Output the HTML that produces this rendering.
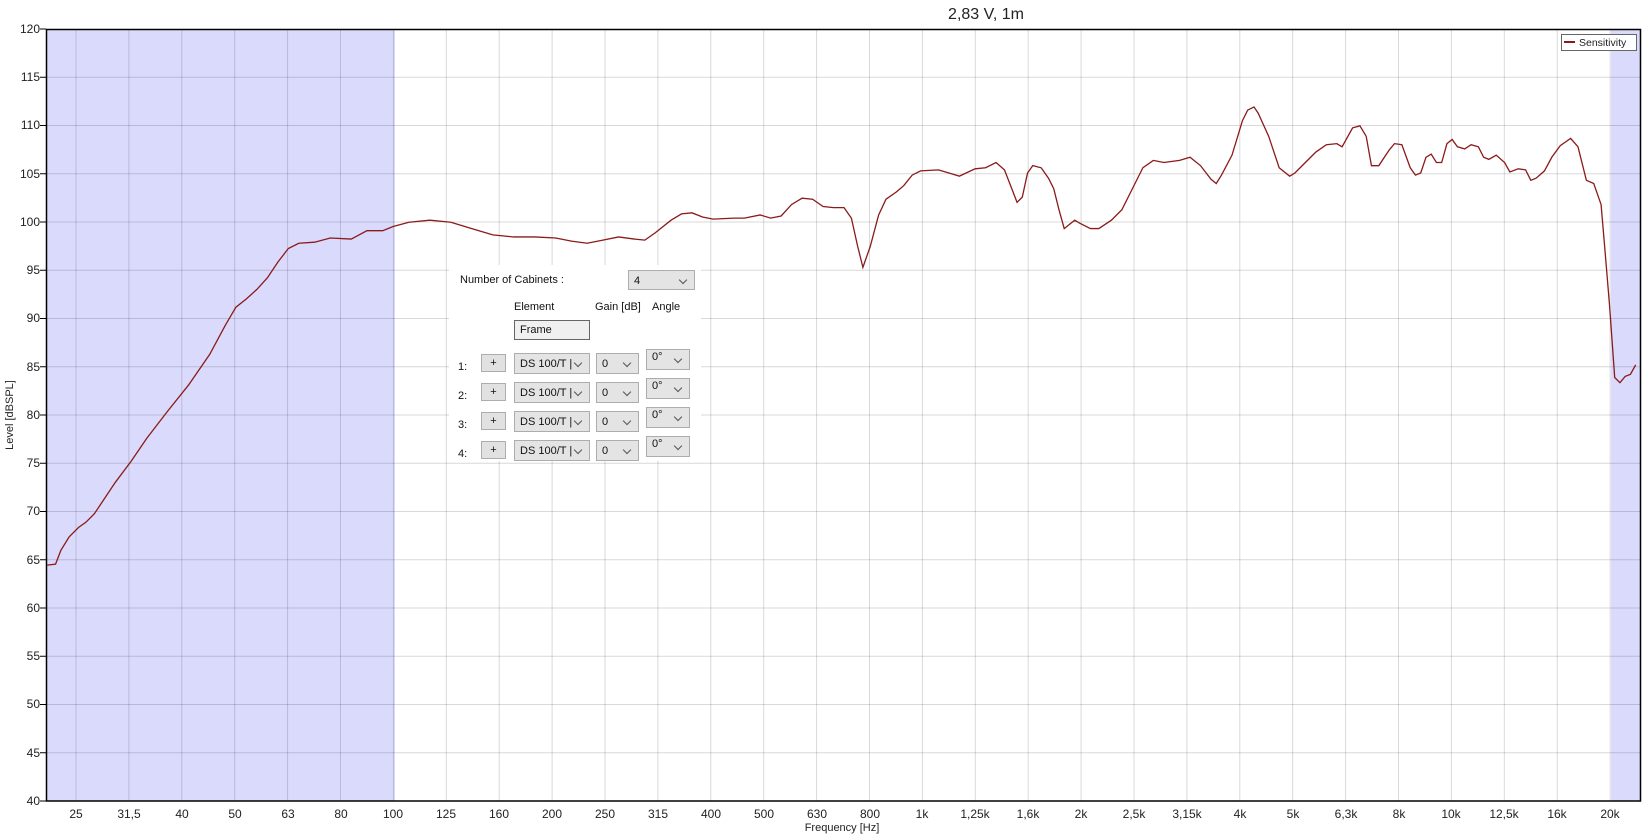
<!DOCTYPE html>
<html><head><meta charset="utf-8"><style>
html,body{margin:0;padding:0;background:#fff;width:1644px;height:837px;overflow:hidden;font-family:"Liberation Sans",sans-serif}
svg{position:absolute;left:0;top:0}
svg text{font-family:"Liberation Sans",sans-serif;fill:#222}
.p{position:absolute;background:#fff;left:449px;top:265px;width:252px;height:196px;font-size:11px;color:#111}
.p div{position:absolute}
.cb{background:#e4e4e4;border:1px solid #adadad;box-sizing:border-box;font-size:11px;padding-left:5px;line-height:20px}
.cb:after{content:"";position:absolute;right:8px;top:6px;width:5px;height:5px;border-right:1px solid #555;border-bottom:1px solid #555;transform:rotate(45deg)}
.bt{background:#e1e1e1;border:1px solid #adadad;box-sizing:border-box;text-align:center;line-height:16px;font-size:11px}
</style></head><body>
<svg width="1644" height="837" viewBox="0 0 1644 837">
<rect x="46" y="29" width="349" height="772" fill="#dadafc"/>
<rect x="1611" y="29" width="30" height="772" fill="#dadafc"/>
<g stroke="#000" stroke-opacity="0.15" stroke-width="1">
<path d="M46 77.25H1641M46 125.5H1641M46 173.75H1641M46 222H1641M46 270.25H1641M46 318.5H1641M46 366.75H1641M46 415H1641M46 463.25H1641M46 511.5H1641M46 559.75H1641M46 608H1641M46 656.25H1641M46 704.5H1641M46 752.75H1641"/>
<path d="M76 29V801M128.9 29V801M181.8 29V801M234.7 29V801M287.6 29V801M340.5 29V801M393.4 29V801M446.3 29V801M499.2 29V801M552.1 29V801M605 29V801M657.9 29V801M710.8 29V801M763.7 29V801M816.6 29V801M869.5 29V801M922.4 29V801M975.3 29V801M1028.2 29V801M1081.1 29V801M1134 29V801M1186.9 29V801M1239.8 29V801M1292.7 29V801M1345.6 29V801M1398.5 29V801M1451.4 29V801M1504.3 29V801M1557.2 29V801M1610.1 29V801"/>
</g>
<rect x="46.5" y="29.5" width="1594" height="771.5" fill="none" stroke="#000" stroke-width="1.5"/>
<g stroke="#000"><path d="M40 29H46M40 77.25H46M40 125.5H46M40 173.75H46M40 222H46M40 270.25H46M40 318.5H46M40 366.75H46M40 415H46M40 463.25H46M40 511.5H46M40 559.75H46M40 608H46M40 656.25H46M40 704.5H46M40 752.75H46M40 801H46"/></g>
<g font-size="12" text-anchor="end">
<text x="40" y="33">120</text><text x="40" y="81">115</text><text x="40" y="129">110</text><text x="40" y="178">105</text><text x="40" y="226">100</text><text x="40" y="274">95</text><text x="40" y="322">90</text><text x="40" y="371">85</text><text x="40" y="419">80</text><text x="40" y="467">75</text><text x="40" y="515">70</text><text x="40" y="564">65</text><text x="40" y="612">60</text><text x="40" y="660">55</text><text x="40" y="708">50</text><text x="40" y="757">45</text><text x="40" y="805">40</text>
</g>
<g font-size="12" text-anchor="middle">
<text x="76" y="818">25</text><text x="129" y="818">31,5</text><text x="182" y="818">40</text><text x="235" y="818">50</text><text x="288" y="818">63</text><text x="341" y="818">80</text><text x="393" y="818">100</text><text x="446" y="818">125</text><text x="499" y="818">160</text><text x="552" y="818">200</text><text x="605" y="818">250</text><text x="658" y="818">315</text><text x="711" y="818">400</text><text x="764" y="818">500</text><text x="817" y="818">630</text><text x="870" y="818">800</text><text x="922" y="818">1k</text><text x="975" y="818">1,25k</text><text x="1028" y="818">1,6k</text><text x="1081" y="818">2k</text><text x="1134" y="818">2,5k</text><text x="1187" y="818">3,15k</text><text x="1240" y="818">4k</text><text x="1293" y="818">5k</text><text x="1346" y="818">6,3k</text><text x="1399" y="818">8k</text><text x="1451" y="818">10k</text><text x="1504" y="818">12,5k</text><text x="1557" y="818">16k</text><text x="1610" y="818">20k</text>
</g>
<text x="842" y="831" font-size="11" text-anchor="middle">Frequency [Hz]</text>
<text x="986" y="19" font-size="16" text-anchor="middle">2,83 V, 1m</text>
<text transform="translate(13,415) rotate(-90)" font-size="11" text-anchor="middle">Level [dBSPL]</text>
<g transform="scale(1.0485)">
<polyline fill="none" stroke="#8b1a1a" stroke-width="1.3" vector-effect="non-scaling-stroke" points="45,539 53,538 58,525 66,512 75,503 82,498 90,490 100,475 110,460 125,440 140,418 160,392 180,367 200,338 215,310 225,293 235,285 245,276 255,265 265,250 275,237 285,232 300,231 315,227 335,228 350,220 365,220 375,216 390,212 410,210 430,212 450,218 470,224 490,226 510,226 530,227 545,230 560,232 575,229 590,226 605,228 615,229 625,222 640,210 650,204 660,203 670,207 680,209 700,208 710,208 725,205 735,208 745,206 755,195 765,189 775,190 785,197 795,198 805,198 812,208 818,235 823,255 830,235 838,205 845,190 855,183 862,177 870,167 878,163 895,162 905,165 915,168 930,161 940,160 950,155 958,162 965,180 970,193 975,188 980,165 985,158 993,160 1000,170 1005,180 1010,200 1015,218 1020,214 1025,210 1030,213 1040,218 1048,218 1060,210 1070,200 1080,180 1090,160 1100,153 1110,155 1125,153 1135,150 1145,158 1155,171 1160,175 1165,167 1175,148 1185,115 1190,105 1196,102 1200,108 1210,130 1220,160 1230,168 1235,165 1245,155 1255,145 1265,138 1275,137 1280,140 1290,122 1297,120 1303,130 1308,158 1315,158 1325,143 1330,137 1337,138 1345,160 1350,167 1355,165 1360,150 1365,147 1370,155 1375,155 1380,137 1385,133 1390,140 1397,142 1403,138 1410,140 1415,150 1420,152 1427,148 1435,155 1440,164 1448,161 1455,162 1460,172 1465,170 1473,163 1480,150 1488,139 1498,132 1505,140 1513,172 1520,175 1527,195 1530,230 1535,290 1540,360 1545,365 1550,359 1555,357 1560,348"/>
</g>
<rect x="1561.5" y="34.5" width="75" height="16" fill="#fff" stroke="#666"/>
<path d="M1564 42H1575" stroke="#8b1a1a" stroke-width="2"/>
<text x="1579" y="46" font-size="10.5">Sensitivity</text>
</svg>
<div class="p">
<div style="left:11px;top:9px">Number of Cabinets :</div>
<div class="cb" style="left:179px;top:5px;width:67px;height:20px">4</div>
<div style="left:65px;top:36px">Element</div>
<div style="left:146px;top:36px">Gain [dB]</div>
<div style="left:203px;top:36px">Angle</div>
<div style="left:65px;top:55px;width:76px;height:20px;border:1px solid #666;background:#f0f0f0;box-sizing:border-box;line-height:18px;padding-left:5px">Frame</div>

<div style="left:-9px;top:0;width:0;height:0"></div>
<div style="left:9px;top:96px">1:</div>
<div class="bt" style="left:32px;top:89px;width:25px;height:18px">+</div>
<div class="cb" style="left:65px;top:88px;width:76px;height:21px">DS 100/T |</div>
<div class="cb" style="left:147px;top:88px;width:43px;height:21px">0</div>
<div class="cb" style="left:197px;top:84px;width:44px;height:21px;line-height:14px">0°</div>

<div style="left:9px;top:125px">2:</div>
<div class="bt" style="left:32px;top:118px;width:25px;height:18px">+</div>
<div class="cb" style="left:65px;top:117px;width:76px;height:21px">DS 100/T |</div>
<div class="cb" style="left:147px;top:117px;width:43px;height:21px">0</div>
<div class="cb" style="left:197px;top:113px;width:44px;height:21px;line-height:14px">0°</div>

<div style="left:9px;top:154px">3:</div>
<div class="bt" style="left:32px;top:147px;width:25px;height:18px">+</div>
<div class="cb" style="left:65px;top:146px;width:76px;height:21px">DS 100/T |</div>
<div class="cb" style="left:147px;top:146px;width:43px;height:21px">0</div>
<div class="cb" style="left:197px;top:142px;width:44px;height:21px;line-height:14px">0°</div>

<div style="left:9px;top:183px">4:</div>
<div class="bt" style="left:32px;top:176px;width:25px;height:18px">+</div>
<div class="cb" style="left:65px;top:175px;width:76px;height:21px">DS 100/T |</div>
<div class="cb" style="left:147px;top:175px;width:43px;height:21px">0</div>
<div class="cb" style="left:197px;top:171px;width:44px;height:21px;line-height:14px">0°</div>
</div>
</body></html>
